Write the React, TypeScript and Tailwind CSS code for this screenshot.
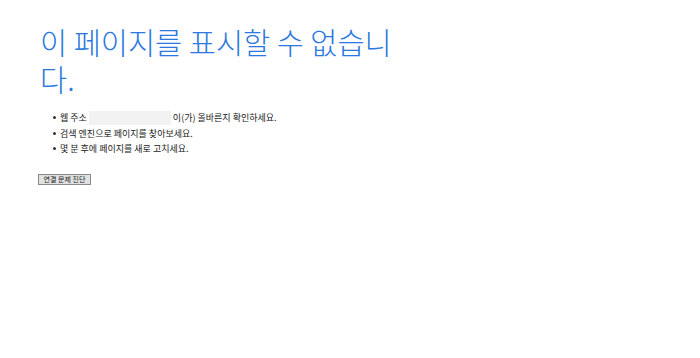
export default function App() {
  const font = { fontFamily: "'Noto Sans CJK KR', 'Noto Sans', sans-serif" }
  const items = [
    null,
    '검색 엔진으로 페이지를 찾아보세요.',
    '몇 분 후에 페이지를 새로 고치세요.',
  ]
  return (
    <div className="h-[358px] w-[700px] bg-white pl-[40px] pt-[23px]" style={font}>
      <h1 className="w-[365px] text-[29.5px] leading-[37px] font-light text-[#2a78e0]">
        이 페이지를 표시할 수 없습니다.
      </h1>
      <ul className="mt-[13px] pl-[13px] text-[9px] leading-[15.5px] text-[#222]">
        {items.map((it, i) => (
          <li key={i} className="flex items-center gap-[4px]">
            <span className="h-[3px] w-[3px] rounded-full bg-[#333]" />
            {it ?? (
              <span className="flex items-center">
                웹 주소
                <span className="mx-[2px] inline-block h-[14px] w-[82px] bg-[#f2f2f2]" />
                이(가) 올바른지 확인하세요.
              </span>
            )}
          </li>
        ))}
      </ul>
      <button className="mt-[17px] -ml-[2px] flex h-[11px] w-[53px] items-center justify-center border border-[#8a8a8a] bg-[#e1e1e1] text-[7px] leading-none text-[#222]">
        연결 문제 진단
      </button>
    </div>
  )
}
